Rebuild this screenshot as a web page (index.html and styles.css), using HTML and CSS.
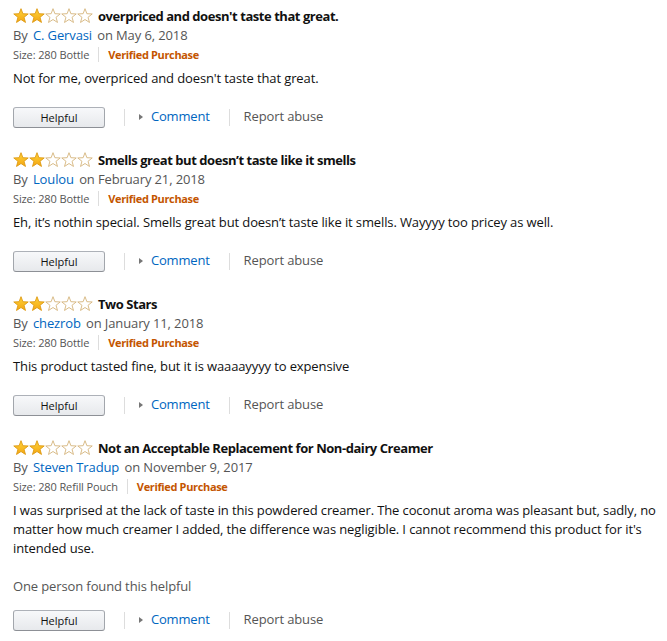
FILE: index.html
```html
<!DOCTYPE html>
<html lang="en">
<head>
  <meta charset="utf-8" />
  <title>Reviews</title>
  <link rel="stylesheet" href="styles.css">
</head>
<body>
  <svg width="0" height="0" class="defs">
    <defs>
      <linearGradient id="gold" x1="0" y1="0" x2="0" y2="1">
        <stop offset="0" stop-color="#ffd43a"/>
        <stop offset="1" stop-color="#f3a511"/>
      </linearGradient>
      <symbol id="star" viewBox="0 0 16 16">
        <polygon points="8,0.7 9.88,5.71 15.23,5.95 11.04,9.29 12.47,14.45 8,11.5 3.53,14.45 4.96,9.29 0.77,5.95 6.12,5.71"/>
      </symbol>
    </defs>
  </svg>

  <div class="reviews">
    <div class="review">
      <div class="title-row">
        <span class="stars">
          <svg class="star full"><use href="#star"/></svg><svg class="star full"><use href="#star"/></svg><svg class="star"><use href="#star"/></svg><svg class="star"><use href="#star"/></svg><svg class="star"><use href="#star"/></svg>
        </span>
        <span class="title">overpriced and doesn't taste that great.</span>
      </div>
      <div class="byline">By <a class="author">C. Gervasi</a> on May 6, 2018</div>
      <div class="meta"><span class="size">Size: 280 Bottle</span><span class="verified">Verified Purchase</span></div>
      <p class="text">Not for me, overpriced and doesn't taste that great.</p>
      <div class="actions">
        <button class="helpful">Helpful</button>
        <span class="sep"></span>
        <a class="comment"><span class="caret"></span>Comment</a>
        <span class="sep"></span>
        <span class="report">Report abuse</span>
      </div>
    </div>

    <div class="review">
      <div class="title-row">
        <span class="stars">
          <svg class="star full"><use href="#star"/></svg><svg class="star full"><use href="#star"/></svg><svg class="star"><use href="#star"/></svg><svg class="star"><use href="#star"/></svg><svg class="star"><use href="#star"/></svg>
        </span>
        <span class="title">Smells great but doesn’t taste like it smells</span>
      </div>
      <div class="byline">By <a class="author">Loulou</a> on February 21, 2018</div>
      <div class="meta"><span class="size">Size: 280 Bottle</span><span class="verified">Verified Purchase</span></div>
      <p class="text">Eh, it’s nothin special. Smells great but doesn’t taste like it smells. Wayyyy too pricey as well.</p>
      <div class="actions">
        <button class="helpful">Helpful</button>
        <span class="sep"></span>
        <a class="comment"><span class="caret"></span>Comment</a>
        <span class="sep"></span>
        <span class="report">Report abuse</span>
      </div>
    </div>

    <div class="review">
      <div class="title-row">
        <span class="stars">
          <svg class="star full"><use href="#star"/></svg><svg class="star full"><use href="#star"/></svg><svg class="star"><use href="#star"/></svg><svg class="star"><use href="#star"/></svg><svg class="star"><use href="#star"/></svg>
        </span>
        <span class="title">Two Stars</span>
      </div>
      <div class="byline">By <a class="author">chezrob</a> on January 11, 2018</div>
      <div class="meta"><span class="size">Size: 280 Bottle</span><span class="verified">Verified Purchase</span></div>
      <p class="text">This product tasted fine, but it is waaaayyyy to expensive</p>
      <div class="actions">
        <button class="helpful">Helpful</button>
        <span class="sep"></span>
        <a class="comment"><span class="caret"></span>Comment</a>
        <span class="sep"></span>
        <span class="report">Report abuse</span>
      </div>
    </div>

    <div class="review">
      <div class="title-row">
        <span class="stars">
          <svg class="star full"><use href="#star"/></svg><svg class="star full"><use href="#star"/></svg><svg class="star"><use href="#star"/></svg><svg class="star"><use href="#star"/></svg><svg class="star"><use href="#star"/></svg>
        </span>
        <span class="title">Not an Acceptable Replacement for Non-dairy Creamer</span>
      </div>
      <div class="byline">By <a class="author">Steven Tradup</a> on November 9, 2017</div>
      <div class="meta"><span class="size">Size: 280 Refill Pouch</span><span class="verified">Verified Purchase</span></div>
      <p class="text">I was surprised at the lack of taste in this powdered creamer. The coconut aroma was pleasant but, sadly, no matter how much creamer I added, the difference was negligible. I cannot recommend this product for it's intended use.</p>
      <p class="votes">One person found this helpful</p>
      <div class="actions">
        <button class="helpful">Helpful</button>
        <span class="sep"></span>
        <a class="comment"><span class="caret"></span>Comment</a>
        <span class="sep"></span>
        <span class="report">Report abuse</span>
      </div>
    </div>
  </div>
</body>
</html>
```

FILE: styles.css
```css
* {
  margin: 0;
  padding: 0;
  box-sizing: border-box;
}

body {
  background: #fff;
  color: #111;
  font-family: "Open Sans", "Noto Sans", sans-serif;
  font-size: 13px;
  letter-spacing: -0.12px;
}

.defs {
  position: absolute;
}

.reviews {
  padding: 5px 0 0 13px;
}

.review {
  margin-bottom: 21px;
}

.title-row {
  display: flex;
  align-items: center;
  height: 21px;
}

.stars {
  display: flex;
  margin-right: 5px;
}

.star {
  width: 16px;
  height: 16px;
  fill: #fff;
  stroke: #d5b47c;
  stroke-width: 0.9;
}

.star.full {
  fill: url(#gold);
  stroke: #de9a12;
}

.title {
  font-weight: 700;
  font-size: 13px;
  letter-spacing: -0.45px;
  color: #111;
}

.byline {
  line-height: 19px;
  color: #555;
}

.author {
  color: #0066c0;
  margin: 0 2px;
}

.meta {
  display: flex;
  align-items: center;
  height: 19px;
  font-size: 11px;
  color: #555;
}

.size {
  padding-right: 9px;
  border-right: 1px solid #ddd;
  line-height: 15px;
}

.verified {
  padding-left: 9px;
  color: #c45500;
  font-weight: 700;
  letter-spacing: -0.35px;
}

.text {
  margin-top: 5px;
  line-height: 19px;
  color: #111;
}

.votes {
  margin-top: 19px;
  line-height: 19px;
  color: #555;
}

.actions {
  display: flex;
  align-items: center;
  margin-top: 19px;
  height: 21px;
  line-height: 19px;
}

.review:last-child .actions {
  margin-top: 14px;
}

.helpful {
  width: 92px;
  height: 21px;
  background: linear-gradient(#f7f8fa, #e7e9ec);
  border: 1px solid #adb1b8;
  border-color: #adb1b8 #a2a6ac #8d9096;
  border-radius: 3px;
  font-family: inherit;
  font-size: 11px;
  color: #111;
}

.sep {
  width: 1px;
  height: 17px;
  background: #ddd;
  margin: 0 14px 0 19px;
}

.sep:last-of-type {
  margin: 0 13px 0 13px;
}

.comment {
  display: flex;
  align-items: center;
  color: #0066c0;
  margin-top: -2px;
  letter-spacing: -0.2px;
}

.caret {
  width: 0;
  height: 0;
  border-left: 4px solid #767676;
  border-top: 3.5px solid transparent;
  border-bottom: 3.5px solid transparent;
  margin-right: 8px;
}

.report {
  color: #555;
  margin-top: -2px;
}
```
